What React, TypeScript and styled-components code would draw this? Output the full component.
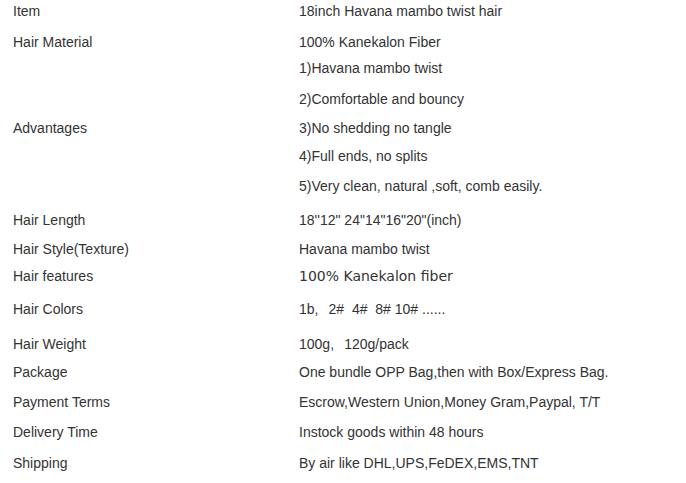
import { createGlobalStyle, styled } from 'styled-components';

const GlobalStyle = createGlobalStyle`
  html, body {
    margin: 0;
    padding: 0;
    background: #fff;
  }
`;

const Sheet = styled.div`
  width: 686px;
  padding: 3px 0 0 13px;
  box-sizing: border-box;
  font-family: 'Liberation Sans', Arial, sans-serif;
  font-size: 14px;
  line-height: 16px;
  color: #333;
`;

const Row = styled.div<{ $h: number }>`
  display: flex;
  align-items: flex-start;
  height: ${({ $h }) => $h}px;
`;

const Label = styled.div`
  width: 286px;
  flex-shrink: 0;
  white-space: nowrap;
`;

const Value = styled.div<{ $wide?: boolean }>`
  white-space: pre;
  font-family: ${({ $wide }) =>
    $wide ? "'DejaVu Sans', Verdana, sans-serif" : "'Liberation Sans', Arial, sans-serif"};
`;

// full-width comma look, without pulling in a CJK font
const Comma = styled.span`
  display: inline-block;
  width: 14px;
`;

type Spec = {
  label: string;
  value: React.ReactNode;
  h: number;
  wide?: boolean;
};

const rows: Spec[] = [
  { label: 'Item', value: '18inch Havana mambo twist hair', h: 31 },
  { label: 'Hair Material', value: '100% Kanekalon Fiber', h: 26 },
  { label: '', value: '1)Havana mambo twist', h: 31 },
  { label: '', value: '2)Comfortable and bouncy', h: 29 },
  { label: 'Advantages', value: '3)No shedding no tangle', h: 28 },
  { label: '', value: '4)Full ends, no splits', h: 30 },
  { label: '', value: '5)Very clean, natural ,soft, comb easily.', h: 34 },
  { label: 'Hair Length', value: '18\'\'12" 24"14"16"20"(inch)', h: 29 },
  { label: 'Hair Style(Texture)', value: 'Havana mambo twist', h: 27 },
  { label: 'Hair features', value: '100% Kanekalon fiber', h: 33, wide: true },
  {
    label: 'Hair Colors',
    value: (
      <>
        1b<Comma>,</Comma>2#  4#  8# 10# ......
      </>
    ),
    h: 35,
  },
  {
    label: 'Hair Weight',
    value: (
      <>
        100g<Comma>,</Comma>120g/pack
      </>
    ),
    h: 28,
  },
  { label: 'Package', value: 'One bundle OPP Bag,then with Box/Express Bag.', h: 30 },
  { label: 'Payment Terms', value: 'Escrow,Western Union,Money Gram,Paypal, T/T', h: 30 },
  { label: 'Delivery Time', value: 'Instock goods within 48 hours', h: 31 },
  { label: 'Shipping', value: 'By air like DHL,UPS,FeDEX,EMS,TNT', h: 20 },
];

export default function App() {
  return (
    <>
      <GlobalStyle />
      <Sheet>
        {rows.map((r, i) => (
          <Row key={i} $h={r.h}>
            <Label>{r.label}</Label>
            <Value $wide={r.wide}>{r.value}</Value>
          </Row>
        ))}
      </Sheet>
    </>
  );
}
